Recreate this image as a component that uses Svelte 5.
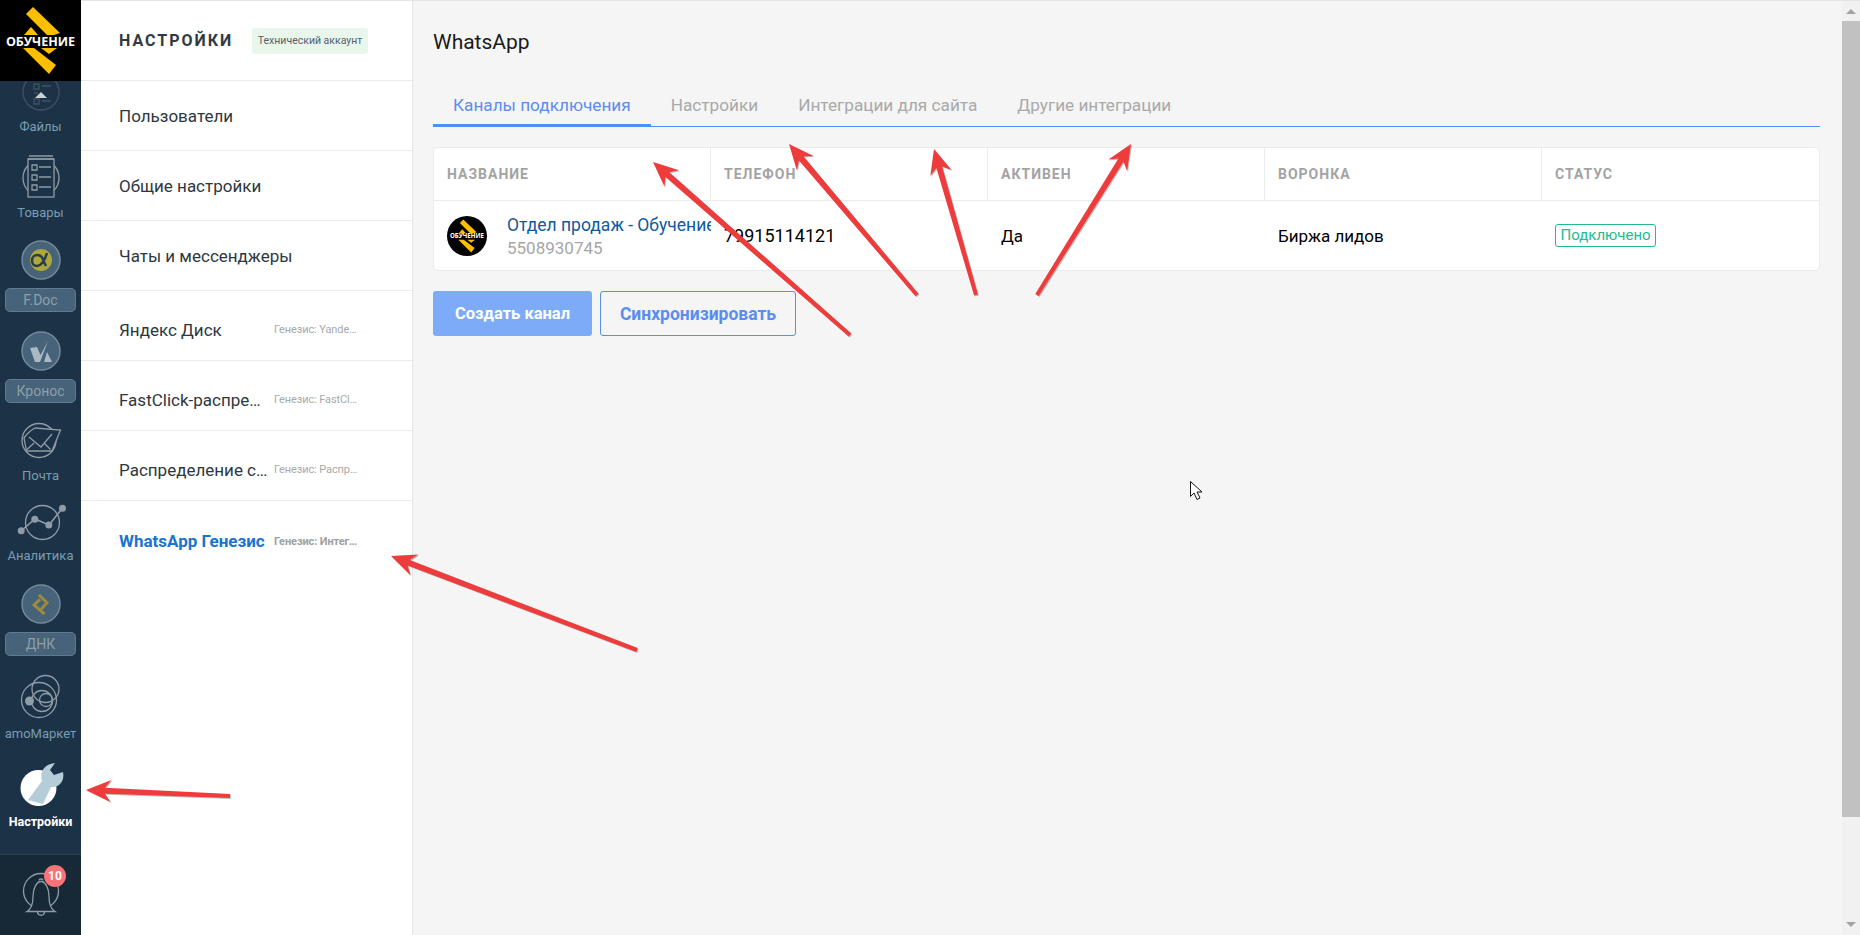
<script lang="ts">
  const navItems = [
    { id: 'files', h: 86, label: 'Файлы' },
    { id: 'goods', h: 82, label: 'Товары' },
    { id: 'fdoc', h: 91, pill: 'F.Doc' },
    { id: 'kronos', h: 90, pill: 'Кронос' },
    { id: 'mail', h: 80, label: 'Почта' },
    { id: 'stats', h: 83, label: 'Аналитика' },
    { id: 'dnk', h: 92, pill: 'ДНК' },
    { id: 'market', h: 92, label: 'amoМаркет' },
    { id: 'settings', h: 88, label: 'Настройки', active: true },
  ];

  const menu = [
    { name: 'Пользователи' },
    { name: 'Общие настройки' },
    { name: 'Чаты и мессенджеры' },
    { name: 'Яндекс Диск', sub: 'Генезис: Yandex Диск' },
    { name: 'FastClick-распределение', sub: 'Генезис: FastClick' },
    { name: 'Распределение сделок', sub: 'Генезис: Распределение' },
    { name: 'WhatsApp Генезис', sub: 'Генезис: Интеграция', active: true },
  ];

  const tabs = ['Каналы подключения', 'Настройки', 'Интеграции для сайта', 'Другие интеграции'];
  const columns = ['Название', 'Телефон', 'Активен', 'Воронка', 'Статус'];

  // [tipX, tipY, tailX, tailY]
  const arrows = [
    [653, 162, 850, 335],
    [789, 144, 917, 295],
    [934, 149, 976, 295],
    [1131, 144, 1037, 295],
    [391, 556, 637, 650],
    [86, 790, 230, 796],
  ];

  function arrowPoints([tx, ty, bx, by]: number[]) {
    const len = Math.hypot(bx - tx, by - ty);
    const ux = (bx - tx) / len;
    const uy = (by - ty) / len;
    const at = (along: number, side: number) =>
      `${(tx + ux * along - uy * side).toFixed(1)},${(ty + uy * along + ux * side).toFixed(1)}`;
    return [at(0, 0), at(25, 11), at(19, 3), at(len, 2), at(len, -2), at(19, -3), at(25, -11)].join(' ');
  }
</script>

{#snippet logoMark()}
  <polygon class="gold" points="33,7 60,33 54,35 47,35 26,14" />
  <polygon class="gold" points="31,27 38,35 24,35" />
  <polygon class="gold" points="23,48 34,48 56,65 49,74" />
  <polygon class="gold" points="41,48 57,48 49,54" />
  <text class="logo-text" x="40.5" y="45.5" text-anchor="middle">ОБУЧЕНИЕ</text>
{/snippet}

{#snippet navIcon(id: string)}
  <svg class="nav-icon" viewBox="0 0 44 44" width="44" height="44">
    {#if id === 'files'}
      <g class="faded">
        <circle cx="22" cy="22" r="18" />
        <path d="M13 8h18M15 14h5v5h-5zM23 16h9M15 23h4M15 29h5v5h-5zM23 31h9" />
      </g>
      <polygon class="up" points="16,28 28,28 22,22" />
    {:else if id === 'goods'}
      <circle cx="22" cy="22" r="18" />
      <rect class="doc" x="9" y="3" width="26" height="38" />
      <path d="M10 0h24M9 3h26" />
      <path d="M13 9h5v5h-5zM20 11h12M13 19h5v5h-5zM20 21h12M13 29h5v5h-5zM20 31h12" />
    {:else if id === 'fdoc'}
      <circle class="disc" cx="22" cy="22" r="19" />
      <circle cx="22" cy="22" r="11" fill="#aca83e" stroke="none" />
      <path class="glyph" d="M28 15C26 22 22 28 18 28 14.500 28 13 25 13 22.500 13 19 15.500 17 18.500 17 22 17 24 20 25 24L27 28" />
    {:else if id === 'kronos'}
      <circle class="disc" cx="22" cy="22" r="19" />
      <polygon class="mark" points="11,19 18,18 21.500,26 29,12 21,33 16,33" />
      <polygon class="mark" points="28,23 33,33 25,33" />
    {:else if id === 'mail'}
      <circle cx="20" cy="21.500" r="17" />
      <path class="folder" d="M7.500 32L5 19Q10 12 16 9L41.500 11 33 32z" />
      <path d="M10 18l12 10 11-13M8 30.500L15 24M25 24l6.500 6.500" />
    {:else if id === 'stats'}
      <circle cx="23.500" cy="23.500" r="17" />
      <path class="trend" d="M2 32l14-12 14 6L43.500 9" />
      <circle class="dot" cx="2.200" cy="31.700" r="3.500" />
      <circle class="dot" cx="15.800" cy="20.300" r="3.500" />
      <circle class="dot" cx="29.800" cy="26" r="3.500" />
      <circle class="dot" cx="43.500" cy="9.300" r="3.500" />
    {:else if id === 'dnk'}
      <circle class="disc" cx="22" cy="22" r="19" />
      <path class="zigzag" d="M20 13l8 7.700-6 6.600M21 17.300L15 23l10.500 9" />
    {:else if id === 'market'}
      <circle cx="20" cy="26" r="17.500" />
      <circle cx="26.500" cy="15" r="13.500" />
      <circle cx="23" cy="27" r="10.500" />
      <circle cx="27" cy="26" r="6.500" />
      <circle class="dot" cx="10.500" cy="27" r="4.500" />
    {:else if id === 'settings'}
      <circle cx="19.500" cy="22" r="18" fill="#fff" stroke="none" />
      <path class="wrench" d="M9 34L23 15C20 5 26-2 36-3L31 4l4 5 9-3C46 15 40 22 32 21L24 38z" />
    {/if}
  </svg>
{/snippet}

<div class="page">
  <nav class="sidebar">
    <div class="logo">
      <svg viewBox="0 0 81 81" width="81" height="81">
        {@render logoMark()}
      </svg>
    </div>
    <div class="nav-scroll">
      {#each navItems as item}
        <div class="nav-item" style:height="{item.h}px">
          {@render navIcon(item.id)}
          {#if item.pill}
            <span class="nav-pill">{item.pill}</span>
          {:else}
            <span class="nav-label" class:active={item.active} class:low={item.id === 'market'}>{item.label}</span>
          {/if}
        </div>
      {/each}
    </div>
    <div class="bell">
      <svg class="nav-icon" viewBox="0 0 44 44" width="44" height="44">
        <circle cx="22" cy="22" r="17.500" />
        <path class="bell-body" d="M8 42.500c5-3 6-9 6-15 0-9 4-15 8-15s8 6 8 15c0 6 1 12 6 15z" />
        <path d="M18.500 42.500c0 5 7 5 7 0M20 11.500c0-2 4-2 4 0" />
      </svg>
      <span class="badge">10</span>
    </div>
  </nav>

  <section class="panel">
    <header class="panel-head">
      <h2>Настройки</h2>
      <span class="tech">Технический аккаунт</span>
    </header>
    {#each menu as row, i}
      <div class="menu-row" class:active={row.active} class:has-sub={row.sub} class:last={i === menu.length - 1}>
        <span class="menu-name">{row.name}</span>
        {#if row.sub}
          <span class="menu-sub">{row.sub}</span>
        {/if}
      </div>
    {/each}
  </section>

  <main class="main">
    <h1>WhatsApp</h1>
    <div class="tabs">
      {#each tabs as tab, i}
        <span class="tab" class:active={i === 0}>{tab}</span>
      {/each}
    </div>

    <div class="table">
      <div class="thead">
        {#each columns as col}
          <div class="th">{col}</div>
        {/each}
      </div>
      <div class="tr">
        <div class="td name-cell">
          <svg class="avatar" viewBox="0 0 81 81" width="40" height="40">
            <circle cx="40.500" cy="40.500" r="40.500" fill="#000" />
            {@render logoMark()}
          </svg>
          <div class="name-text">
            <span class="channel">Отдел продаж - Обучение</span>
            <span class="channel-id">5508930745</span>
          </div>
        </div>
        <div class="td phone">79915114121</div>
        <div class="td">Да</div>
        <div class="td">Биржа лидов</div>
        <div class="td"><span class="status">Подключено</span></div>
      </div>
    </div>

    <div class="actions">
      <button class="btn primary">Создать канал</button>
      <button class="btn outline">Синхронизировать</button>
    </div>
  </main>

  <div class="scrollbar">
    <span class="sb-up"></span>
    <div class="sb-thumb"></div>
    <span class="sb-down"></span>
  </div>
</div>

<svg class="overlay" width="1860" height="935">
  {#each arrows as a}
    <polygon class="arrow" points={arrowPoints(a)} />
  {/each}
  <path class="cursor" d="M1190.500 481.500v15l3.500-3.500 3 6.500 3-1.500-3-6h5z" />
</svg>

<style>
  :global(body) {
    font-family: Roboto, "Noto Sans", sans-serif;
    overflow: hidden;
  }

  .page {
    display: flex;
    height: 935px;
    background: #fff;
  }

  .sidebar {
    width: 81px;
    flex-shrink: 0;
    display: flex;
    flex-direction: column;
    background: #1c3246;
  }

  .logo {
    height: 81px;
    flex-shrink: 0;
    background: #000;
    position: relative;
    z-index: 1;
  }

  .logo svg, .avatar { display: block; }
  .gold { fill: #fdbf00; }

  .logo-text {
    font: 700 12.5px "Open Sans", sans-serif;
    fill: #fff;
  }

  .nav-scroll {
    flex: 1;
    min-height: 0;
    overflow: hidden;
    margin-top: -11px;
  }

  .nav-item {
    display: flex;
    flex-direction: column;
    align-items: center;
  }

  .nav-icon {
    flex-shrink: 0;
    overflow: visible;
    fill: none;
    stroke: #8f9ca7;
    stroke-width: 1.3;
  }

  .faded { opacity: 0.3; }
  .up { fill: #c9d1d7; stroke: none; }
  .doc { fill: #1c3246; }
  .folder { fill: #1c3246; }
  .dot { fill: #8f9ca7; stroke: none; }
  .trend { stroke-width: 1.6; }
  .disc { fill: #466379; stroke: #74899a; stroke-width: 1.5; }
  .glyph { stroke: #2c3d46; stroke-width: 2.500; }
  .mark { fill: #a9b9c5; stroke: none; }
  .zigzag { stroke: #9c8a3e; stroke-width: 3; }
  .wrench { fill: #b5ccd9; stroke: none; }
  .bell-body { fill: #172937; }

  .nav-label {
    margin-top: 4px;
    font-size: 13px;
    line-height: 18px;
    color: #7a9db3;
    white-space: nowrap;
  }

  .nav-label.low { margin-top: 7px; }

  .nav-label.active {
    margin-top: 3px;
    font-size: 12.500px;
    font-weight: 700;
    color: #fff;
  }

  .nav-pill {
    box-sizing: border-box;
    width: 71px;
    height: 24px;
    margin-top: 6px;
    border: 1px solid #5f7b91;
    border-radius: 5px;
    background: #46637a;
    color: #8f9ea9;
    font-size: 14px;
    line-height: 22px;
    text-align: center;
  }

  .bell {
    position: relative;
    height: 81px;
    flex-shrink: 0;
    display: flex;
    justify-content: center;
    padding-top: 14px;
    box-sizing: border-box;
    border-top: 1px solid #2a4053;
    background: #172937;
  }

  .badge {
    position: absolute;
    top: 10px;
    left: 44px;
    width: 22px;
    height: 22px;
    border-radius: 50%;
    background: #f8727a;
    color: #fff;
    font-size: 12px;
    font-weight: 700;
    line-height: 22px;
    text-align: center;
  }

  .panel {
    width: 332px;
    flex-shrink: 0;
    box-sizing: border-box;
    border-top: 1px solid #e4e4e4;
    border-right: 1px solid #e6e6e6;
  }

  .panel-head {
    display: flex;
    align-items: center;
    height: 79px;
    padding-left: 38px;
    border-bottom: 1px solid #ebebeb;
  }

  h2 {
    margin: 0 19px 0 0;
    font-size: 16px;
    font-weight: 700;
    letter-spacing: 2px;
    text-transform: uppercase;
    color: #313942;
  }

  .tech {
    padding: 0 5.500px;
    border-radius: 3px;
    background: #e9f6ec;
    font-size: 10.500px;
    line-height: 26px;
    color: #555f66;
  }

  .menu-row {
    display: flex;
    align-items: center;
    box-sizing: border-box;
    height: 70px;
    padding-left: 38px;
    border-bottom: 1px solid #ebebeb;
    font-size: 17px;
    color: #2e3740;
  }

  .menu-row.has-sub { padding-top: 8px; }

  .menu-row.last {
    height: 72px;
    border-bottom: none;
  }

  .menu-name {
    overflow: hidden;
    text-overflow: ellipsis;
    white-space: nowrap;
  }

  .has-sub .menu-name {
    box-sizing: border-box;
    width: 155px;
    flex-shrink: 0;
    padding-right: 4px;
  }

  .menu-row.active .menu-name {
    font-weight: 700;
    color: #1a73d0;
  }

  .menu-sub {
    width: 85px;
    overflow: hidden;
    text-overflow: ellipsis;
    white-space: nowrap;
    font-size: 11px;
    letter-spacing: -0.1px;
    color: #a9a9a9;
  }

  .menu-row.active .menu-sub {
    font-weight: 700;
    color: #a0a0a0;
  }

  .main {
    flex: 1;
    min-width: 0;
    box-sizing: border-box;
    padding: 0 22px 0 20px;
    border-top: 1px solid #e4e4e4;
    background: #f5f5f5;
  }

  h1 {
    margin: 27px 0 0;
    font-size: 21px;
    font-weight: 400;
    line-height: 28px;
    color: #1a1a1a;
  }

  .tabs {
    display: flex;
    margin-top: 24px;
    height: 47px;
    box-sizing: border-box;
    border-bottom: 1px solid #4f8ff7;
  }

  .tab {
    padding: 12px 20px 0;
    font-size: 17.200px;
    line-height: 26px;
    color: #a9a9a9;
    white-space: nowrap;
  }

  .tab.active {
    height: 47px;
    box-sizing: border-box;
    border-bottom: 3px solid #4f8ff7;
    color: #5a8df0;
  }

  .table {
    margin-top: 20px;
    border: 1px solid #ebebeb;
    border-radius: 5px;
    background: #fff;
    overflow: hidden;
  }

  .thead, .tr {
    display: grid;
    grid-template-columns: repeat(5, 1fr);
  }

  .thead {
    height: 52px;
    border-bottom: 1px solid #ebebeb;
  }

  .th {
    display: flex;
    align-items: center;
    padding-left: 13px;
    border-right: 1px solid #ebebeb;
    font-size: 14px;
    font-weight: 700;
    letter-spacing: 1px;
    text-transform: uppercase;
    color: #a3a3a3;
  }

  .th:last-child { border-right: none; }

  .tr { height: 69px; }

  .td {
    display: flex;
    align-items: center;
    min-width: 0;
    padding-left: 13px;
    font-size: 17px;
    color: #000;
  }

  .td.phone { font-size: 18px; }

  .name-cell { overflow: hidden; }

  .avatar {
    flex-shrink: 0;
    margin-right: 20px;
  }

  .name-text {
    display: flex;
    flex-direction: column;
    padding-top: 1px;
    white-space: nowrap;
  }

  .channel {
    font-size: 17.500px;
    line-height: 24px;
    color: #10599f;
  }

  .channel-id {
    font-size: 17px;
    line-height: 22px;
    color: #a6a6a6;
  }

  .status {
    padding: 0 4.500px;
    border: 1px solid #22bb8f;
    border-radius: 3px;
    font-size: 15px;
    line-height: 21px;
    color: #22bb8f;
  }

  .actions {
    display: flex;
    gap: 8px;
    margin-top: 20px;
  }

  .btn {
    height: 45px;
    box-sizing: border-box;
    border-radius: 3px;
    font-family: inherit;
    font-weight: 700;
  }

  .primary {
    width: 159px;
    border: none;
    background: #7eabf7;
    color: #fff;
    font-size: 16.500px;
  }

  .outline {
    width: 196px;
    border: 1px solid #5a8df0;
    background: transparent;
    color: #5a8df0;
    font-size: 17.500px;
  }

  .scrollbar {
    width: 18px;
    flex-shrink: 0;
    display: flex;
    flex-direction: column;
    align-items: center;
    background: #f1f1f1;
    border-top: 1px solid #e4e4e4;
  }

  .sb-up, .sb-down {
    width: 0;
    height: 0;
    border-left: 5px solid transparent;
    border-right: 5px solid transparent;
  }

  .sb-up {
    margin-top: 8px;
    border-bottom: 5px solid #a3a3a3;
  }

  .sb-thumb {
    width: 100%;
    height: 796px;
    margin-top: 7px;
    background: #c1c1c1;
  }

  .sb-down {
    margin-top: 105px;
    border-top: 5px solid #a3a3a3;
  }

  .overlay {
    position: absolute;
    top: 0;
    left: 0;
    pointer-events: none;
  }

  .arrow {
    fill: #ee3b3b;
    filter: drop-shadow(1px 1px 0.5px rgba(0, 0, 0, 0.25));
  }

  .cursor {
    fill: #fff;
    stroke: #111;
    stroke-width: 1;
  }
</style>
